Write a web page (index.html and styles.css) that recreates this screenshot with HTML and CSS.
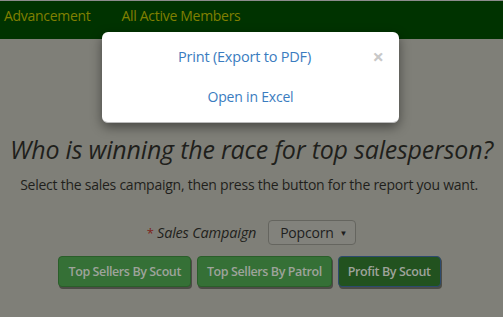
FILE: index.html
```html
<!DOCTYPE html>
<html>
<head>
<meta charset="utf-8">
<link rel="stylesheet" href="styles.css">
</head>
<body>
<div class="topline"></div>
<nav class="navbar">
  <a class="nav-link">Advancement</a>
  <a class="nav-link">All Active Members</a>
</nav>
<main class="content">
  <h1 class="title">Who is winning the race for top salesperson?</h1>
  <p class="lead">Select the sales campaign, then press the button for the report you want.</p>
  <div class="field">
    <span class="req">*</span><span class="label">Sales Campaign</span>
    <div class="select"><span>Popcorn</span><span class="caret">▼</span></div>
  </div>
  <div class="buttons">
    <button class="btn">Top Sellers By Scout</button>
    <button class="btn">Top Sellers By Patrol</button>
    <button class="btn active">Profit By Scout</button>
  </div>
</main>
<div class="modal">
  <a class="modal-link first">Print (Export to PDF)</a>
  <a class="modal-link">Open in Excel</a>
  <span class="close">×</span>
</div>
</body>
</html>
```
FILE: styles.css
```css
html, body {
  margin: 0;
  padding: 0;
}
body {
  background: #7f7f78;
  font-family: "Open Sans", "Noto Sans", sans-serif;
  width: 503px;
  height: 317px;
  overflow: hidden;
  position: relative;
}
.topline {
  height: 1px;
  background: #8c8c8c;
}
.navbar {
  height: 38px;
  background: #003300;
  display: flex;
  align-items: flex-start;
  padding-left: 4px;
  gap: 31px;
}
.nav-link {
  color: #808000;
  font-size: 14px;
  line-height: 29px;
  letter-spacing: -0.3px;
}
.content {
  display: flex;
  flex-direction: column;
  align-items: center;
}
.title {
  margin: 92px 0 0;
  font-size: 25px;
  font-weight: 400;
  font-style: italic;
  color: #1f1f1c;
  line-height: 36px;
  letter-spacing: -0.2px;
  white-space: nowrap;
}
.lead {
  margin: 8px 0 0;
  font-size: 14px;
  color: #1f1f1c;
  line-height: 20px;
  letter-spacing: -0.25px;
  margin-left: -5px;
}
.field {
  margin-top: 25px;
  display: flex;
  align-items: center;
  margin-left: 0px;
}
.req {
  color: #7d1f1a;
  font-size: 13px;
  margin-right: 3px;
}
.label {
  font-style: italic;
  font-size: 14.5px;
  color: #1f1f1c;
  margin-right: 12px;
  letter-spacing: -0.2px;
}
.select {
  border: 1px solid #65655f;
  border-radius: 4px;
  background: #82827c;
  display: flex;
  align-items: center;
  justify-content: space-between;
  padding: 0 8px 0 11px;
  box-sizing: border-box;
  width: 88px;
  height: 25px;
  font-size: 14px;
  letter-spacing: -0.2px;
  color: #1e1e1e;
}
.caret {
  font-size: 8px;
  color: #1e1e1e;
}
.buttons {
  margin-top: 11px;
  display: flex;
  gap: 6px;
  margin-left: -4px;
}
.btn {
  font-family: "Open Sans", sans-serif;
  font-weight: 600;
  font-size: 12.5px;
  letter-spacing: -0.4px;
  color: #9ea39b;
  background: #357036;
  border: 1px solid #2a5e2a;
  border-radius: 4px;
  box-shadow: 1px 2px 0 #4c4c46;
  height: 31px;
  padding: 0 9px;
}
.btn.active {
  background: #22521f;
  border: 1px solid #2c4a6e;
}
.modal {
  position: absolute;
  left: 102px;
  top: 32px;
  width: 297px;
  height: 91px;
  background: #ffffff;
  border-radius: 6px;
  box-shadow: 0 4px 12px rgba(0,0,0,0.45);
  border-bottom: 1px solid #bbb;
  box-sizing: border-box;
  display: flex;
  flex-direction: column;
  align-items: center;
  padding-top: 14px;
  gap: 18px;
}
.modal-link {
  color: #3a7cc0;
  font-size: 14px;
  line-height: 22px;
  letter-spacing: -0.2px;
}
.modal-link.first {
  font-size: 14.5px;
  margin-right: 12px;
}
.close {
  position: absolute;
  right: 15px;
  top: 14px;
  color: #c8c8c8;
  font-size: 20px;
  font-weight: 700;
  line-height: 22px;
}
```
